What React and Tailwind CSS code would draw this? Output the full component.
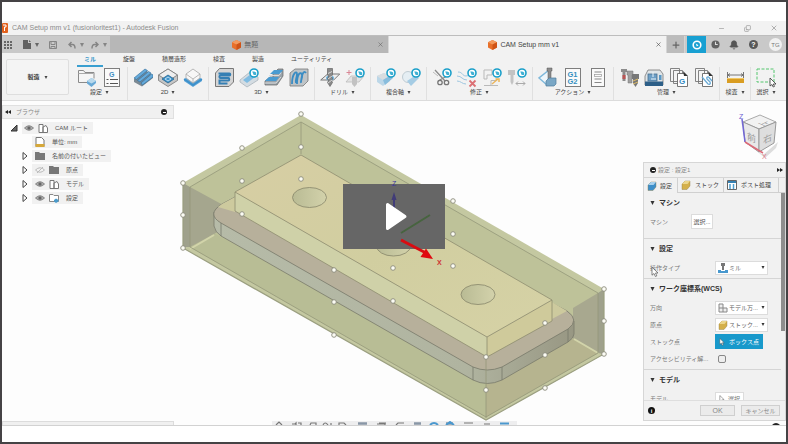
import { useState } from "react";
import { Bell, Copy, Minus, Plus, X } from "lucide-react";

const BLUE = "#3f8fc4";

function Caret({ className = "w-[4px] h-[4px]" }) {
  return (
    <svg viewBox="0 0 4 4" className={`shrink-0 ${className}`} fill="currentColor" aria-hidden="true">
      <path d="M0 0h4L2 4z" />
    </svg>
  );
}

function Cube({ className }) {
  return (
    <svg viewBox="0 0 10 11" className={`shrink-0 ${className}`} aria-hidden="true">
      <path d="M5 0l5 2.4v5.8L5 11 0 8.200V2.400z" fill="#e8702a" />
      <path d="M5 0l5 2.400L5 5 0 2.400z" fill="#f39a5d" />
      <path d="M5 5l5-2.600v5.800L5 11z" fill="#cf5417" />
    </svg>
  );
}

/* small round extension badge shown over add-on commands */
function Badge() {
  return (
    <g>
      <circle cx="15" cy="6" r="4" fill="#fff" stroke="#1a9fc9" strokeWidth="1.600" />
      <path d="M13.200 4.500h2l2 1v2.500h-2.500z" fill="#3fb0d3" />
    </g>
  );
}

const icons = {
  setup: (
    <>
      <path d="M1.500 15.500V3.500h5l1.500 2h9v6M1.500 15.500h9" fill="#f6f6f6" stroke="#8a8a8a" />
      <path d="M1.500 6.500h15" stroke="#aaa" />
      <path d="M10 14l4.500-3 4.500 3v2l-4.500 4-4.500-3.500z" fill="#69a9d6" />
      <path d="M10 14l4.500-3 4.500 3-4.500 2.500z" fill="#b9d9ec" />
    </>
  ),
  sheet: (
    <>
      <rect x="2.500" y="1.500" width="15" height="18" fill="#fafafa" stroke="#7e7e7e" />
      <text x="7" y="9.500" fontSize="7" fontWeight="bold" fill={BLUE}>G</text>
      <path d="M4.500 12.500h2M8 12.500h8M4.500 16.500h2M8 16.500h8" stroke="#555" />
    </>
  ),
  face: (
    <>
      <path d="M1 12L12 3l8 5v3L9 19.500 1 15z" fill="#7c8a94" />
      <path d="M1 11l11-9 2.500 1.500-11 9zM4.500 13.500l11-9L18 6 7 15zM8 16L18.500 7l1.500 1v2L9.500 18z" fill="#65aadb" stroke="#2d6c9b" strokeWidth=".6" />
    </>
  ),
  adaptive2d: (
    <>
      <path d="M10 2l9.500 6v5.500L10 19.500.500 13.500V8z" fill="#c6c6c6" stroke="#777" strokeWidth=".8" />
      <path d="M10 2l9.500 6L10 14 .500 8z" fill="#eee" stroke="#777" strokeWidth=".8" />
      <path d="M10 8l6 4-6 4-6-4z" fill="#3f93cb" stroke="#24658f" strokeWidth=".8" />
      <path d="M7 12l3-2 3 2-3 2z" fill="none" stroke="#d7ecf8" strokeWidth=".8" />
    </>
  ),
  contour2d: (
    <>
      <path d="M1 12l9-5 9 5v2l-9 6-9-6z" fill="#58a2d6" />
      <path d="M10 2l7 5v4l-7 5-7-5V7z" fill="#f7f7f7" stroke="#a7a7a7" strokeWidth=".8" />
      <path d="M3 7l7 5 7-5M10 12v4" fill="none" stroke="#aaa" strokeWidth=".8" />
      <path d="M1 12l9 6 9-6" fill="none" stroke="#3b8fca" strokeWidth="1.500" />
    </>
  ),
  adaptive3d: (
    <>
      <path d="M1.500 6l4-4.500h14V15l-4.500 4.500H1.500z" fill="#d5d5d5" stroke="#777" />
      <path d="M4.500 6.500h11c1 0 1 2 0 2h-9c-1.500 0-1.500 2.500 0 2.500h8c1 0 1 2.500 0 2.500h-9v3h8" fill="none" stroke="#347fb4" strokeWidth="2" />
    </>
  ),
  pocket3d: (
    <>
      <path d="M1 13l10-8 8 5v3L8 20l-7-5z" fill="#d4dce2" stroke="#aab4bb" strokeWidth=".8" />
      <path d="M4 13l8-6 4 3-8 6z" fill="#7fbce2" />
      <Badge />
    </>
  ),
  parallel: (
    <>
      <path d="M1 14l5-4h3V7l5-5h5v7l-6 9H1z" fill="#9aa3aa" stroke="#666" strokeWidth=".7" />
      <path d="M6 7l4-4h9l-3 4zM1 14l4-4h10l-3 4z" fill="#4a9bd1" />
      <path d="M5 8.500h10l2-3M1 16h11l5-6" fill="none" stroke="#ddd" />
    </>
  ),
  scallop: (
    <>
      <path d="M1 6l5-4h13v12l-5 5H1z" fill="#bfc4c7" stroke="#777" strokeWidth=".8" />
      <path d="M3 17C3 6 8 3 8 7s-2 6-1 9M8 17c0-11 4-13 5-9s-2 5-1 8M12 15c1-9 3-12 5-9" fill="none" stroke="#3a8cc3" strokeWidth="1.800" />
    </>
  ),
  drill: (
    <>
      <path d="M.700 13l7-6h12l-6 6z" fill="#eee" stroke="#777" />
      <ellipse cx="10" cy="11" rx="4" ry="2.500" fill="#6cb0da" />
      <path d="M7.500 1.500h5v6l-1 2 1 2-1 2 1 2-2.500 4-2.500-4 1-2-1-2 1-2-1-2z" fill="#8a8a8a" stroke="#555" strokeWidth=".6" />
      <path d="M8 6.500l4-2M8 12l4-3M8 16l4-3" stroke="#eee" strokeWidth=".8" />
    </>
  ),
  holeAdd: (
    <>
      <path d="M4 3v5M1.500 5.500h5" stroke="#d98795" />
      <path d="M1 15l5-6h13l-5 6z" fill="#e3e3e3" stroke="#bbb" strokeWidth=".8" />
      <path d="M7 10h5v7l-2.500 3L7 17z" fill="#c2c2c2" />
      <Badge />
    </>
  ),
  multiAxis: (
    <>
      <path d="M1 9l7-3 6 3v5l-7 5-6-4z" fill="#bcd7e8" />
      <path d="M1 9l7-3 6 3-7 4z" fill="#d9dde0" />
      <path d="M7 13l8-5 2 3-8 7z" fill="#88bddd" />
      <Badge />
    </>
  ),
  multiAxis2: (
    <>
      <circle cx="7" cy="10" r="5.500" fill="#e5eef3" stroke="#c0ccd3" />
      <path d="M6 14l9-6 3 3-8 8z" fill="#a5cce4" />
      <Badge />
    </>
  ),
  scissors: (
    <>
      <path d="M3 3l10 11M15 9l-9 5" stroke="#8b8b8b" strokeWidth="1.300" />
      <path d="M1 5l5 4" stroke="#bbb" />
      <circle cx="8" cy="15.500" r="2.200" fill="none" stroke="#777" strokeWidth="1.300" />
      <circle cx="14.500" cy="15.500" r="2.200" fill="none" stroke="#777" strokeWidth="1.300" />
      <Badge />
    </>
  ),
  removePath: (
    <>
      <path d="M1 5c5 0 4 4 8 4s4-3 8-3M0 9c5 0 5 4 10 4M0 14c4 0 5 3 9 3" fill="none" stroke="#9dc6e0" />
      <path d="M12.500 13.500l6 6M18.500 13.500l-6 6" stroke="#dc7074" strokeWidth="1.800" />
      <Badge />
    </>
  ),
  editPath: (
    <>
      <path d="M2 3h8v5H5v4H2zM2 18.500h7v-5h5" fill="none" stroke="#b9b9b9" />
      <path d="M10 17l6-5M13.500 12H17v3" fill="none" stroke="#ecb65b" strokeWidth="1.500" />
      <path d="M16 18.500H9" stroke="#bbb" />
      <Badge />
    </>
  ),
  replaceTool: (
    <>
      <path d="M1 3h7v5H6.500v7L5 18l-1.500-3V8H1z" fill="#c3c3c3" />
      <path d="M9 16.500h9M11 14.500l-2 2 2 2M16 14.500l2 2-2 2" fill="none" stroke="#aaa" />
      <Badge />
    </>
  ),
  simulate: (
    <>
      <path d="M11 3L1 11l8 7" fill="#eef6fb" stroke="#7fb8da" strokeWidth="1.500" />
      <path d="M9 1h5v3h-1v9l-1.500 2-1.500-2V4H9z" fill="#8d8d8d" stroke="#555" strokeWidth=".5" />
      <path d="M8 14l3-3h7v6l-2 2H8z" fill="#7aa7c5" stroke="#4f7c9b" strokeWidth=".7" />
    </>
  ),
  post: (
    <>
      <rect x="2.500" y="1.500" width="15" height="18" fill="#fafafa" stroke="#7e7e7e" />
      <text x="4.500" y="9.500" fontSize="7.500" fontWeight="bold" fill="#358fc0">G1</text>
      <text x="4.500" y="17" fontSize="7.500" fontWeight="bold" fill="#358fc0">G2</text>
    </>
  ),
  setupSheet: (
    <>
      <rect x="3.500" y="1.500" width="13" height="18" fill="#fafafa" stroke="#7e7e7e" />
      <path d="M6.500 5h7M6.500 12h7M6.500 15.500h7" stroke="#888" />
      <rect x="6.500" y="7.500" width="7" height="2" fill="none" stroke="#999" strokeWidth=".7" />
    </>
  ),
  toolLibrary: (
    <>
      <path d="M2 2h6v3H6.500v9h-3V5H2z" fill="#8c8c8c" />
      <path d="M3.500 8h3v4h-3z" fill="#b55" />
      <path d="M8 4h6v4h-1v8H9V8H8z" fill="#9f9f9f" stroke="#777" strokeWidth=".5" />
      <path d="M13 7h7v5h-1v4l-2.500 4L14 16v-4h-1z" fill="#777" />
      <path d="M14 14l5-2M14 17l5-2" stroke="#ddbb66" />
    </>
  ),
  machine: (
    <>
      <path d="M1 9l3-6h12l3 4v11H1z" fill="#dfe4e7" stroke="#777" strokeWidth=".8" />
      <rect x="4" y="7" width="9" height="7" fill="#6d9fc6" stroke="#476f8f" strokeWidth=".8" />
      <path d="M9 5v5M7 12h5" stroke="#eaf4fa" />
      <rect x="15" y="8" width="2.500" height="5" fill="#5a97c4" />
      <path d="M1 14.500h18V19H1z" fill="#2d5f88" />
    </>
  ),
  postLibrary: (
    <>
      <path d="M1.500 1.500h9v13h-9zM4.500 3.500h9v13h-9z" fill="#f4f4f4" stroke="#777" strokeWidth=".9" />
      <path d="M8.500 6.500h7l3 3v10h-10z" fill="#fff" stroke="#666" strokeWidth=".9" />
      <path d="M14 4l5 5h-4z" fill="#333" />
      <text x="10" y="17" fontSize="8" fontWeight="bold" fill="#3288c2">G</text>
    </>
  ),
  templates: (
    <>
      <path d="M1.500 1.500h9v13h-9zM4.500 3.500h9v13h-9z" fill="#f4f4f4" stroke="#777" strokeWidth=".9" />
      <path d="M8.500 6.500h7l3 3v10h-10z" fill="#fff" stroke="#666" strokeWidth=".9" />
      <path d="M14 4l5 5h-4z" fill="#333" />
      <path d="M8 10l6 7c1.500 1 3-.5 2-2l-3-3c-1-1.500 1-3 2-1.500l3 3.500" fill="none" stroke="#69aad5" strokeWidth="1.300" />
    </>
  ),
  measure: (
    <>
      <path d="M2.500 5v6M18.500 5v6M3 8h15M5 6.500L3 8l2 1.500M16 6.500L18 8l-2 1.500" fill="none" stroke="#666" strokeWidth=".9" />
      <path d="M2 11.500h17V16H2z" fill="#d99d22" />
      <path d="M2 11.500h17" stroke="#f1c865" />
    </>
  ),
  select: (
    <>
      <rect x="1" y="2" width="17" height="13" fill="none" stroke="#55c66e" strokeWidth="1" strokeDasharray="3 1.500" />
      <path d="M14 11v8l2-1.500 1.200 2.500 1.300-.600L17.300 17H20z" fill="#fff" stroke="#333" strokeWidth=".8" />
    </>
  ),
};

const groups = [
  { label: "設定", items: ["setup", "sheet"] },
  { label: "2D", items: ["face", "adaptive2d", "contour2d"] },
  { label: "3D", items: ["adaptive3d", "pocket3d", "parallel", "scallop"] },
  { label: "ドリル", items: ["drill", "holeAdd"] },
  { label: "複合軸", items: ["multiAxis", "multiAxis2"] },
  { label: "修正", items: ["scissors", "removePath", "editPath", "replaceTool"] },
  { label: "アクション", items: ["simulate", "post", "setupSheet"] },
  { label: "管理", items: ["toolLibrary", "machine", "postLibrary", "templates"] },
  { label: "検査", items: ["measure"] },
  { label: "選択", items: ["select"] },
];

const ribbonTabs = ["ミル", "旋盤", "積層造形", "検査", "製造", "ユーティリティ"];

function TitleBar() {
  return (
    <header className="flex h-[14px] shrink-0 items-center bg-[#f2f2f2] text-[#8c8c8c]">
      <svg viewBox="0 0 6 10" className="h-[10px] w-[6px]" aria-hidden="true">
        <rect width="6" height="10" rx="1" fill="#e2601c" />
        <path d="M1 2h3v2H2.500v4" fill="none" stroke="#fff" />
      </svg>
      <h1 className="ml-1 text-[7px]">CAM Setup mm v1 (fusionloritest1) - Autodesk Fusion</h1>
      <div className="ml-auto mr-2 flex gap-[19px]">
        <button aria-label="最小化"><Minus className="size-[7px]" /></button>
        <button aria-label="元に戻す"><Copy className="size-[7px] -scale-x-100 rotate-180" /></button>
        <button aria-label="閉じる"><X className="size-[8px]" /></button>
      </div>
    </header>
  );
}

function DocumentTabs() {
  return (
    <div className="flex h-[18px] shrink-0 border-t border-[#bdbdbd] bg-[#c9c9c9] text-[7px] text-[#666]">
      <div className="flex w-[108px] shrink-0 items-center pl-[2px]">
        <button aria-label="データパネル">
          <svg viewBox="0 0 8 8" className="size-2" fill="#666">
            <path d="M0 0h2v2H0zM3 0h2v2H3zM6 0h2v2H6zM0 3h2v2H0zM3 3h2v2H3zM6 3h2v2H6zM0 6h2v2H0zM3 6h2v2H3zM6 6h2v2H6z" />
          </svg>
        </button>
        <button aria-label="ファイル" className="ml-[11px] flex items-center gap-1">
          <svg viewBox="0 0 8 9" className="h-[9px] w-2" fill="#626262"><path d="M0 0h5v3h3v6H0zM6 0l2 2H6z" /></svg>
          <Caret />
        </button>
        <button aria-label="保存" className="ml-[10px]">
          <svg viewBox="0 0 8 8" className="size-2" fill="none" stroke="#858585"><path d="M.500.500h7v7h-7zM2 .500v3h4v-3M2 7.500v-2h4v2" /></svg>
        </button>
        <button aria-label="元に戻す" className="ml-[11px] flex items-center gap-1 text-[#858585]">
          <svg viewBox="0 0 8 8" className="size-2" fill="none" stroke="currentColor" strokeWidth="1.500"><path d="M3.500 1L1 3.500 3.500 6M1 3.500h3.500q2.500 0 2.500 4" /></svg>
          <Caret />
        </button>
        <button aria-label="やり直し" className="ml-[7px] flex items-center gap-1 text-[#858585]">
          <svg viewBox="0 0 8 8" className="size-2" fill="none" stroke="currentColor" strokeWidth="1.500"><path d="M4.500 1L7 3.500 4.500 6M7 3.500H3.500Q1 3.500 1 7.500" /></svg>
          <Caret />
        </button>
      </div>
      <div className="flex flex-1 items-center border-r border-[#d8d8d8] bg-[#b7b7b7] px-1">
        <span className="flex flex-1 items-center justify-center gap-[3px]"><Cube className="h-[10px] w-[9px]" />無題</span>
        <button aria-label="無題を閉じる"><X className="size-[7px]" /></button>
      </div>
      <div className="flex flex-1 items-center bg-[#f2f2f2] px-1 text-[#444]">
        <span className="flex flex-1 items-center justify-center gap-[3px]"><Cube className="h-[10px] w-[9px]" />CAM Setup mm v1</span>
        <button aria-label="CAM Setup mm v1 を閉じる"><X className="size-[7px]" /></button>
      </div>
      <div className="flex w-[120px] shrink-0 items-center">
        <button aria-label="新規タブ" className="grid h-full w-[19px] place-items-center border-x border-[#d5d5d5] bg-[#bcbcbc]"><Plus className="size-[10px]" strokeWidth={3} /></button>
        <button aria-label="拡張機能" className="ml-[2px] grid h-full w-[19px] place-items-center bg-[#18a0d2]">
          <svg viewBox="0 0 10 10" className="size-[10px]"><circle cx="5" cy="5" r="3.800" fill="none" stroke="#fff" strokeWidth="1.600" /><path d="M3.800 3.500l2.700 1.800-1.700 1.200z" fill="#fff" /></svg>
        </button>
        <button aria-label="ジョブの状態" className="ml-[5px]">
          <svg viewBox="0 0 10 10" className="size-[9px]"><circle cx="5" cy="5" r="4.500" fill="#626262" /><path d="M5 2v3h2.500" fill="none" stroke="#ddd" strokeWidth="1.200" /></svg>
        </button>
        <button aria-label="通知" className="ml-[9px]"><Bell className="size-[10px]" fill="#555" color="#555" /></button>
        <button aria-label="ヘルプ" className="ml-[10px] grid size-[9px] place-items-center rounded-full bg-[#585858] text-[7px] font-bold leading-none text-white">?</button>
        <button className="ml-[11px] grid size-[13px] place-items-center rounded-full bg-[#f1f1f1] text-[6px] leading-none text-[#777]">TG</button>
      </div>
    </div>
  );
}

function Ribbon() {
  const [tab, setTab] = useState("ミル");

  return (
    <div className="flex h-12 shrink-0 border-b border-[#dcdcdc] bg-[#f2f2f2]">
      <button className="mb-[5px] ml-1 mt-[6px] flex w-[63px] shrink-0 items-center justify-center gap-1 rounded-[2px] border border-[#dedede] bg-[#f4f4f4] font-bold">
        製造 <Caret className="h-[3px] w-[4px]" />
      </button>
      <div className="ml-[8px] flex min-w-0 flex-1 flex-col">
        <nav className="flex h-[14px] gap-[13px]">
          {ribbonTabs.map((name) => (
            <button
              key={name}
              onClick={() => setTab(name)}
              className={
                name === tab
                  ? "whitespace-nowrap border-b-2 border-[#3a9fd0] px-[7px] font-bold text-[#2a8fc6]"
                  : "whitespace-nowrap border-b-2 border-transparent px-[7px]"
              }
            >
              {name}
            </button>
          ))}
        </nav>
        <div className="flex flex-1">
          {groups.map((group, i) => (
            <div
              key={group.label}
              className={
                i === 0
                  ? "flex flex-col items-center border-r border-[#e0e0e0] pr-[5px]"
                  : i === groups.length - 1
                  ? "flex flex-col items-center px-[5px]"
                  : "flex flex-col items-center border-r border-[#e0e0e0] px-[5px]"
              }
            >
              <div className="flex gap-[5px]">
                {group.items.map((item) => (
                  <button key={item} aria-label={item}>
                    <svg viewBox="0 0 20 21" className="h-[21px] w-5" fill="none">{icons[item]}</svg>
                  </button>
                ))}
              </div>
              <button className="flex items-center gap-[3px] whitespace-nowrap">{group.label}<Caret className="h-[3px] w-[4px]" /></button>
            </div>
          ))}
        </div>
      </div>
    </div>
  );
}

function Eye({ off }) {
  return (
    <svg viewBox="0 0 10 6" className="h-[6px] w-[10px] shrink-0" aria-hidden="true">
      <path d="M.500 3Q5-1.500 9.500 3 5 7.500.500 3z" fill={off ? "#f2f2f2" : "#aaa"} stroke={off ? "#bbb" : "#858585"} />
      {off ? <path d="M2 6l6-6" stroke="#bbb" /> : <circle cx="5" cy="3" r="1.600" fill="#666" />}
    </svg>
  );
}

const treeIcons = {
  component: <path d="M1 1.500h4v8H1zM5 4l3-1.500L9.500 5v4.500H5z" fill="#fff" stroke="#777" />,
  unit: (
    <>
      <path d="M1 .500h5.500L9 3v6.500H1z" fill="#fff" stroke="#777" />
      <path d="M.500 7h9v3h-9z" fill="#d6a83a" />
    </>
  ),
  folder: <path d="M0 1h4l1 1h5v7H0z" fill="#777" />,
  setup: (
    <>
      <path d="M.500 8.500v-7h3.500l1 1h4.500v6z" fill="#fff" stroke="#888" />
      <path d="M5 7l2-1.500L9.500 7v1.500L7 10 5 8.500z" fill="#4b9aca" />
    </>
  ),
};

const tree = [
  { text: "単位: mm", icon: "unit", leaf: true },
  { text: "名前の付いたビュー", icon: "folder" },
  { text: "原点", icon: "folder", eye: "off" },
  { text: "モデル", icon: "component", eye: "on" },
  { text: "設定", icon: "setup", eye: "on" },
];

function TreeIcon({ name }) {
  return <svg viewBox="0 0 10 10" className="size-[10px] shrink-0" fill="none" aria-hidden="true">{treeIcons[name]}</svg>;
}

function BrowserPanel() {
  return (
    <aside className="relative mt-1">
      <div className="flex h-[14px] w-[172px] items-center border border-[#e0e0e0] bg-[#f0f0f0] pl-[2px] pr-[6px] text-[#888]">
        <svg viewBox="0 0 6 4" className="mr-[5px] h-[4px] w-[6px]"><path d="M3 0v4L0 2zM6 0v4L3 2z" fill="#222" /></svg>
        ブラウザ
        <button aria-label="ブラウザを閉じる" className="ml-auto grid size-[6px] place-items-center rounded-full bg-[#222]"><span className="h-px w-[3px] bg-white" /></button>
      </div>
      <ul className="mt-[3px] flex flex-col gap-[2px] text-[#555]">
        <li className="flex h-3 items-center pl-2">
          <svg viewBox="0 0 8 8" className="mr-1 size-2"><path d="M7 1v6H1z" fill="#666" stroke="#333" /></svg>
          <span className="flex h-full items-center gap-1 bg-[#f1f1f1] pl-[2px] pr-[5px]">
            <Eye />
            <TreeIcon name="component" />
            <span className="ml-[3px]">CAM ルート</span>
          </span>
        </li>
        {tree.map((row) => (
          <li key={row.text} className="flex h-3 items-center pl-5">
            {row.leaf ? (
              <span className="w-[10px]" />
            ) : (
              <button aria-label={`${row.text}を展開`} className="mr-1">
                <svg viewBox="0 0 6 8" className="h-2 w-[6px]"><path d="M1 .500v7l4-3.500z" fill="#fff" stroke="#444" /></svg>
              </button>
            )}
            <span className="flex h-full items-center gap-1 bg-[#f1f1f1] px-[3px] pr-[5px]">
              {row.eye && <Eye off={row.eye === "off"} />}
              <TreeIcon name={row.icon} />
              <span className="ml-[3px]">{row.text}</span>
            </span>
          </li>
        ))}
      </ul>
    </aside>
  );
}

const handles = [
  [301, 114], [242, 148], [183, 183], [183, 215], [183, 248], [242, 181], [242, 214], [301, 147], [301, 179],
  [334, 270], [334, 302], [334, 335], [393, 268], [393, 301], [453, 201], [453, 234], [453, 266], [604, 289],
  [604, 321], [604, 354], [545, 323], [545, 355], [545, 388], [486, 357], [486, 390],
];

function Model() {
  return (
    <svg viewBox="2 101 784 324" preserveAspectRatio="xMidYMin slice" className="absolute inset-0 h-full w-full" aria-label="ストックとモデル">
      <defs>
        <linearGradient id="top" x1="0" y1="0" x2="1" y2="1">
          <stop offset="0" stopColor="#d7cea4" />
          <stop offset=".5" stopColor="#d1cea0" />
          <stop offset="1" stopColor="#d6d2a6" />
        </linearGradient>
        <linearGradient id="hole">
          <stop offset="0" stopColor="#b9bb94" />
          <stop offset="1" stopColor="#d3d2ab" />
        </linearGradient>
        <linearGradient id="side">
          <stop offset="0" stopColor="#b6bba8" />
          <stop offset=".7" stopColor="#b0b4a0" />
          <stop offset="1" stopColor="#989783" />
        </linearGradient>
      </defs>

      {/* stock walls and floor */}
      <path d="M301 115L604 289V354L486 420 183 248V183z" fill="#c4c8a1" />
      <path d="M301 122L598 293V353L486 417 190 247V187z" fill="#bec299" />
      <path d="M190 247L214 233 473 378H502L574 338 598 353 486 417z" fill="#b8bd95" />
      <path d="M486 384L574 338 598 353 486 417z" fill="#b6b48f" />
      <path d="M183 183L190 187V247H183zM598 293L604 289V354L598 353z" fill="#9fa18c" />
      <path d="M190 187L236 212V222L190 247z" fill="#a5a68e" />
      <path d="M598 293V353L573 338V308z" fill="#a8a88f" />
      <path d="M190 249L214 235M598 353L574 339" stroke="#d2d4aa" strokeWidth="2" />

      {/* flange */}
      <path d="M214 212V226Q215 232 221 236L473 380Q487 387 502 380L568 342Q574 338 574 334V321L487 357z" fill="url(#side)" stroke="#797a6b" strokeWidth=".8" />
      <path d="M235 197L222 204Q206 214 221 223L473 367Q487 373 502 367L568 329Q580 320 567 311L552 303z" fill="#b7b09b" stroke="#77786a" strokeWidth=".8" />
      <path d="M235 197L222 204 218 207 235 212zM552 302L567 311 552 319z" fill="#cdca9e" />
      <path d="M221 223V236M473 367V380M502 367V380M568 329V342" stroke="#77786a" strokeWidth=".8" />

      {/* block */}
      <path d="M235 192L487 337V357L235 211z" fill="#cfd1a8" />
      <path d="M487 337L552 300V321L487 357z" fill="#cfca9b" />
      <path d="M301 155L552 300 487 337 235 192z" fill="url(#top)" />
      <path d="M301 155L552 300 487 337 235 192zM235 192V211L487 357 552 321V300M487 337V357" fill="none" stroke="#8e8d70" strokeWidth=".8" />
      <g fill="url(#hole)" stroke="#86856a" strokeWidth=".8">
        <ellipse cx="309.500" cy="197.500" rx="17" ry="10" />
        <ellipse cx="393.500" cy="246" rx="17" ry="10" />
        <ellipse cx="478" cy="294.500" rx="17" ry="10" />
      </g>

      {/* stock edges */}
      <path d="M301 154V122L190 187V247L486 417 598 353V293L301 122M486 357V418" fill="none" stroke="#94987a" strokeWidth=".8" />
      <path d="M183 183V248L486 420 604 354V289" fill="none" stroke="#9b9f80" strokeWidth="1.200" />

      <g fill="#fcfcf4" stroke="#8b8b7d" strokeWidth=".9">
        {handles.map(([x, y]) => (
          <circle key={`${x}-${y}`} cx={x} cy={y} r="2.300" />
        ))}
      </g>
    </svg>
  );
}

function PlayButton() {
  return (
    <button aria-label="再生" className="absolute left-1/2 top-[83px] h-[65px] w-[102px] -translate-x-1/2 bg-[#666]">
      <svg viewBox="0 0 102 65" className="h-full w-full overflow-visible">
        <text x="49" y="2" fontSize="7" fill="#3a35a0">Z</text>
        <path d="M51 24V12" stroke="#413c78" strokeWidth="2" />
        <path d="M48.500 16L51 8l2.500 8z" fill="#413c78" />
        <path d="M58 49L87 31" stroke="#47643f" strokeWidth="2" />
        <path d="M58 56L83 69" stroke="#d90c12" strokeWidth="3" />
        <path d="M83 64.500L90 75l-12.500-2z" fill="#e0080f" />
        <text x="94" y="80.500" fontSize="7" fontWeight="bold" fill="#cf3232">X</text>
        <path d="M44.500 20.500v24L62 32.500z" fill="#fff" stroke="#fff" strokeWidth="3" strokeLinejoin="round" />
      </svg>
    </button>
  );
}

function ViewCube() {
  return (
    <svg viewBox="0 0 42 50" className="h-[50px] w-[42px]" aria-label="ビューキューブ">
      <path d="M8 30L25 43 40 30 38 36 27 46z" fill="#ddd" />
      <path d="M5 10L22 3 38 10 21 17z" fill="#f2f2f2" stroke="#aaa" />
      <path d="M5 10L21 17V40L7 30z" fill="#e8e8e8" stroke="#999" />
      <path d="M21 17L38 10 36 31 21 40z" fill="#dedede" stroke="#999" />
      <text transform="matrix(.8 .35 -.8 .4 20 11)" fontSize="9" fill="#888">上</text>
      <text transform="matrix(1 .45 0 1 9 27)" fontSize="9" fill="#999">前</text>
      <text transform="matrix(1 -.45 0 1 25 32)" fontSize="9" fill="#999">右</text>
      <path d="M4 7L7 30" stroke="#7267d6" strokeWidth="1.500" />
      <path d="M7 30L25 41" stroke="#dc6b78" strokeWidth="1.500" />
      <text x="1" y="7" fontSize="7" fill="#6c60d0">Z</text>
      <text x="24" y="47" fontSize="7" fill="#e07885">X</text>
    </svg>
  );
}

function StockIcon({ color = "#d4b04b", light = "#ecd68c" }) {
  return (
    <svg viewBox="0 0 10 10" className="size-[10px] shrink-0" aria-hidden="true">
      <path d="M1 4l3-3h5v5L6 9.500H1z" fill={color} stroke="#8d7b47" strokeWidth=".4" />
      <path d="M1 4l3-3h5L6.500 4z" fill={light} />
    </svg>
  );
}

function MillIcon() {
  return (
    <svg viewBox="0 0 10 10" className="size-[10px] shrink-0" aria-hidden="true">
      <path d="M3 0h4v3H6v4H4V3H3z" fill="#777" />
      <path d="M0 7h3v1h4V7h3v3H0z" fill="#4898ce" />
    </svg>
  );
}

function ModelIcon() {
  return (
    <svg viewBox="0 0 10 10" className="size-[10px] shrink-0" fill="#eee" stroke="#888" aria-hidden="true">
      <path d="M1 1h4v4h4v4H1zM1 5h4v4" />
    </svg>
  );
}

function Pointer({ className }) {
  return (
    <svg viewBox="0 0 8 11" className={className} aria-hidden="true">
      <path d="M1 .700v8l2-1.700 1.400 3 1.400-.600L4.500 6.500H7z" fill="#fff" stroke="#555" strokeWidth=".7" />
    </svg>
  );
}

function Section({ title, children }) {
  return (
    <section className="border-b border-[#d5d5d5] pb-[2px] pl-[6px] pr-2">
      <h3 className="flex h-[20px] items-center gap-[4px] text-[7px] font-bold text-[#333]">
        <Caret className="h-[4px] w-[5px]" />
        {title}
      </h3>
      {children}
    </section>
  );
}

function Row({ id, label, wide, children }) {
  return (
    <div className="flex h-[17px] items-center text-[#777]">
      <label htmlFor={id} className={wide ? "w-[65px] shrink-0 whitespace-nowrap" : "w-[41px] shrink-0"}>{label}</label>
      {children}
    </div>
  );
}

function Picker({ id, icon, value }) {
  return (
    <div className="flex h-[14px] w-[53px] items-center gap-px border border-[#dcdcdc] bg-white px-[2px]">
      {icon}
      <select id={id} className="min-w-0 flex-1 appearance-none bg-transparent text-[#666]">
        <option>{value}</option>
      </select>
      <Caret className="h-[3px] w-[4px] text-[#333]" />
    </div>
  );
}

function SetupDialog() {
  return (
    <div className="flex min-h-0 w-[143px] flex-1 flex-col border border-[#d6d6d6] bg-[#f1f1f1]">
      <div className="flex h-[14px] shrink-0 items-center gap-[2px] pl-[6px] pr-[2px] text-[#888]">
        <span className="grid size-[6px] place-items-center rounded-full bg-[#222]"><span className="h-px w-[3px] bg-white" /></span>
        設定 : 設定1
        <svg viewBox="0 0 6 4" className="ml-auto h-[4px] w-[6px]"><path d="M0 0v4l3-2zM3 0v4l3-2z" fill="#222" /></svg>
      </div>
      <div role="tablist" className="flex h-[16px] shrink-0 border-t border-[#d6d6d6]">
        <button role="tab" aria-selected="true" className="flex w-[34px] items-center gap-[3px] whitespace-nowrap border-r border-[#d0d0d0] pl-[3px]">
          <StockIcon color="#3e8fc9" light="#a8d1ee" />設定
        </button>
        <button role="tab" aria-selected="false" className="flex w-[46px] items-center gap-[4px] whitespace-nowrap border-b border-r border-[#d0d0d0] pl-[3px]">
          <StockIcon />ストック
        </button>
        <button role="tab" aria-selected="false" className="flex w-[55px] items-center gap-[4px] whitespace-nowrap border-b border-r border-[#d0d0d0] pl-[3px]">
          <svg viewBox="0 0 10 10" className="size-[10px]"><path d="M.500.500h9v9h-9z" fill="#fff" stroke="#666" /><path d="M1 1h8v2H1z" fill="#3681b2" /><path d="M3 4v5M6.500 4v5" stroke="#4b9ed0" strokeWidth="1.500" /></svg>
          ポスト処理
        </button>
        <span className="flex-1 border-b border-[#d0d0d0]" />
      </div>

      <div className="flex min-h-0 flex-1 overflow-hidden">
        <div className="min-w-0 flex-1">
          <Section title="マシン">
            <div className="mb-[6px]">
              <Row id="machine" label="マシン">
                <button id="machine" className="h-[15px] w-[22px] border border-[#dcdcdc] bg-white text-[#555]">選択...</button>
              </Row>
            </div>
          </Section>
          <Section title="設定">
            <Row id="operation" label="操作タイプ" wide>
              <Picker id="operation" icon={<MillIcon />} value="ミル" />
            </Row>
          </Section>
          <Section title="ワーク座標系(WCS)">
            <Row id="orientation" label="万向" wide>
              <Picker id="orientation" icon={<ModelIcon />} value="モデル万..." />
            </Row>
            <Row id="origin" label="原点" wide>
              <Picker id="origin" icon={<StockIcon />} value="ストック..." />
            </Row>
            <Row id="stock-point" label="ストック点" wide>
              <button id="stock-point" className="flex h-[15px] w-[48px] items-center justify-center gap-[4px] whitespace-nowrap bg-[#1899cb] text-white">
                <Pointer className="h-[8px] w-[6px]" />ボックス点
              </button>
            </Row>
            <Row id="accessibility" label="アクセシビリティ解..." wide>
              <input id="accessibility" type="checkbox" className="ml-[3px] size-[8px] appearance-none rounded-[2px] border border-[#888] bg-[#eee]" />
            </Row>
          </Section>
          <Section title="モデル">
            <Row id="model" label="モデル" wide>
              <button id="model" className="flex h-[14px] w-[29px] items-center justify-center gap-[3px] border border-[#dcdcdc] bg-white">
                <Pointer className="h-[8px] w-[6px]" />選択
              </button>
            </Row>
          </Section>
        </div>
        <div className="w-[4px]"><div className="h-2/3 bg-[#8e8e8e]" /></div>
      </div>

      <footer className="flex h-[20px] shrink-0 items-center gap-[6px] border-t border-[#dedede] pl-[4px] pr-[5px] text-[#888]">
        <span className="mr-auto grid size-[7px] place-items-center rounded-full bg-[#111] text-[6px] font-bold leading-none text-white">i</span>
        <button className="h-[11px] w-[35px] border border-[#cfcfcf] bg-[#ebebeb] text-[7px] leading-none">OK</button>
        <button className="h-[11px] w-[39px] whitespace-nowrap border border-[#cfcfcf] bg-[#ebebeb] leading-none">キャンセル</button>
      </footer>
    </div>
  );
}

function NavBar() {
  return (
    <div className="absolute bottom-0 left-[270px] flex h-1 w-[245px] items-start overflow-hidden bg-[#eeeeef]">
      <svg viewBox="0 0 245 4" className="h-1 w-[245px]" fill="none" stroke="#777" strokeWidth="1.200">
        <path d="M4 4l3-3 3 3M20 3h3l1-1v2M26 2h3v2M38 4l1-2h5v2M51 4q2-4 5 0M59 2v2M67 4V2h5l2 2M105 3h8v1M107 2h7M124 4l2-2h6" />
        <path d="M86 2.500h9M142 2.500h7M174 2.500h7" stroke="#8997a6" strokeWidth="2.500" />
        <path d="M158 4q4-4 8 0M174 4l4-3 4 3M228 2.500h9" stroke="#4b98ce" strokeWidth="2" />
        <path d="M192 2h9M212 3h6" />
      </svg>
    </div>
  );
}

export default function App() {
  return (
    <div className="flex h-screen flex-col overflow-hidden border-2 border-[#454345] bg-white pb-4 pt-[19px] text-[6px] leading-[8px] text-[#444] [font-family:'Liberation_Sans','Noto_Sans_CJK_JP',sans-serif]">
      <TitleBar />
      <DocumentTabs />
      <Ribbon />
      <main className="relative flex min-h-0 flex-1 justify-between overflow-hidden border-b border-[#d2d2d2] bg-[#fdfdfd]">
        <Model />
        <BrowserPanel />
        <div className="relative flex flex-col pb-1">
          <div className="flex h-[61px] shrink-0 items-end justify-end pr-[6px]"><ViewCube /></div>
          <SetupDialog />
        </div>
        <PlayButton />
        <Pointer className="absolute right-[127px] top-[165px] h-[12px] w-[8px]" />
        <div className="absolute bottom-0 left-0 h-1 w-[172px] border border-b-0 border-[#dcdcdc] bg-[#f0f0f0]" />
        <NavBar />
        <svg viewBox="0 0 8 2" className="absolute bottom-0 right-[6px] h-[2px] w-2"><path d="M0 2q4-4 8 0z" fill="#222" /></svg>
      </main>
    </div>
  );
}
